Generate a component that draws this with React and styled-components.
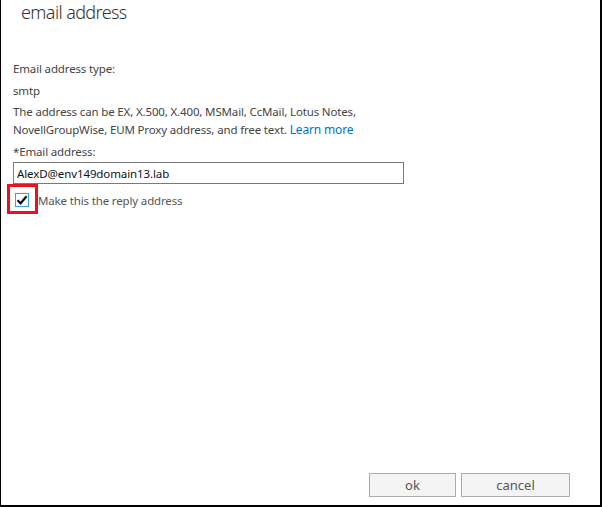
import React from "react";
import styled, { createGlobalStyle } from "styled-components";

const Global = createGlobalStyle`
  html, body { margin: 0; padding: 0; background: #fff; }
  * { box-sizing: border-box; }
`;

const Frame = styled.div`
  width: 602px;
  height: 507px;
  border-left: 1px solid #000;
  border-right: 2px solid #000;
  border-bottom: 2px solid #000;
  display: flex;
  flex-direction: column;
  font-family: "Segoe UI", "Noto Sans", "Open Sans", sans-serif;
  color: #444;
  background: #fff;
`;

const Title = styled.h1`
  margin: 0;
  padding-left: 20px;
  font-size: 18px;
  font-weight: 300;
  line-height: 24px;
  color: #333;
  letter-spacing: -0.6px;
`;

const Body = styled.div`
  padding: 0 0 0 12px;
  display: flex;
  flex-direction: column;
  margin-top: 36px;
`;

const Text = styled.div`
  margin-top: ${(p) => p.$mt || 0}px;
  font-size: 11.5px;
  line-height: 18px;
  color: #444;
  letter-spacing: -0.15px;
`;

const Link = styled.a`
  color: #0072c6;
  text-decoration: none;
  font-size: 12px;
`;

const Input = styled.input`
  margin-top: 1px;
  width: 391px;
  height: 22px;
  border: 1px solid #7a7a7a;
  padding: 0 3px;
  font-family: inherit;
  font-size: 11.5px;
  color: #111;
  outline: none;
  letter-spacing: -0.1px;
`;

const CheckRow = styled.label`
  position: relative;
  margin-top: 7px;
  display: flex;
  align-items: center;
  gap: 9px;
  height: 18px;
  font-size: 11.5px;
  color: #555;
  letter-spacing: -0.15px;
`;

const Box = styled.span`
  margin-left: 2px;
  width: 14px;
  height: 14px;
  border: 1px solid #3c9fe0;
  background: #fff;
  display: flex;
  align-items: center;
  justify-content: center;
`;

const Highlight = styled.span`
  position: absolute;
  left: -6px;
  top: -7px;
  width: 31px;
  height: 30px;
  border: 3px solid #e81123;
  pointer-events: none;
`;

const Footer = styled.div`
  margin-top: auto;
  display: flex;
  justify-content: flex-end;
  gap: 5px;
  padding: 0 30px 8px 0;
`;

const Button = styled.button`
  width: ${(p) => p.$w}px;
  height: 24px;
  background: #f4f4f4;
  border: 1px solid #acacac;
  font-family: inherit;
  font-size: 13px;
  color: #555;
  padding: 0;
  line-height: 20px;
`;

export default function App() {
  return (
    <>
      <Global />
      <Frame>
        <Title>email address</Title>
        <Body>
          <Text>Email address type:</Text>
          <Text $mt={4}>smtp</Text>
          <Text $mt={3}>
            The address can be EX, X.500, X.400, MSMail, CcMail, Lotus Notes,
            <br />
            NovellGroupWise, EUM Proxy address, and free text.{" "}
            <Link href="#">Learn more</Link>
          </Text>
          <Text $mt={4}>*Email address:</Text>
          <Input defaultValue="AlexD@env149domain13.lab" />
          <CheckRow>
            <Box>
              <svg width="12" height="12" viewBox="0 0 12 12">
                <path d="M1.5 6.2 L4.6 9.3 L10.6 2.2" fill="none" stroke="#111" strokeWidth="2.2" />
              </svg>
            </Box>
            <Highlight />
            Make this the reply address
          </CheckRow>
        </Body>
        <Footer>
          <Button $w={87}>ok</Button>
          <Button $w={109}>cancel</Button>
        </Footer>
      </Frame>
    </>
  );
}
